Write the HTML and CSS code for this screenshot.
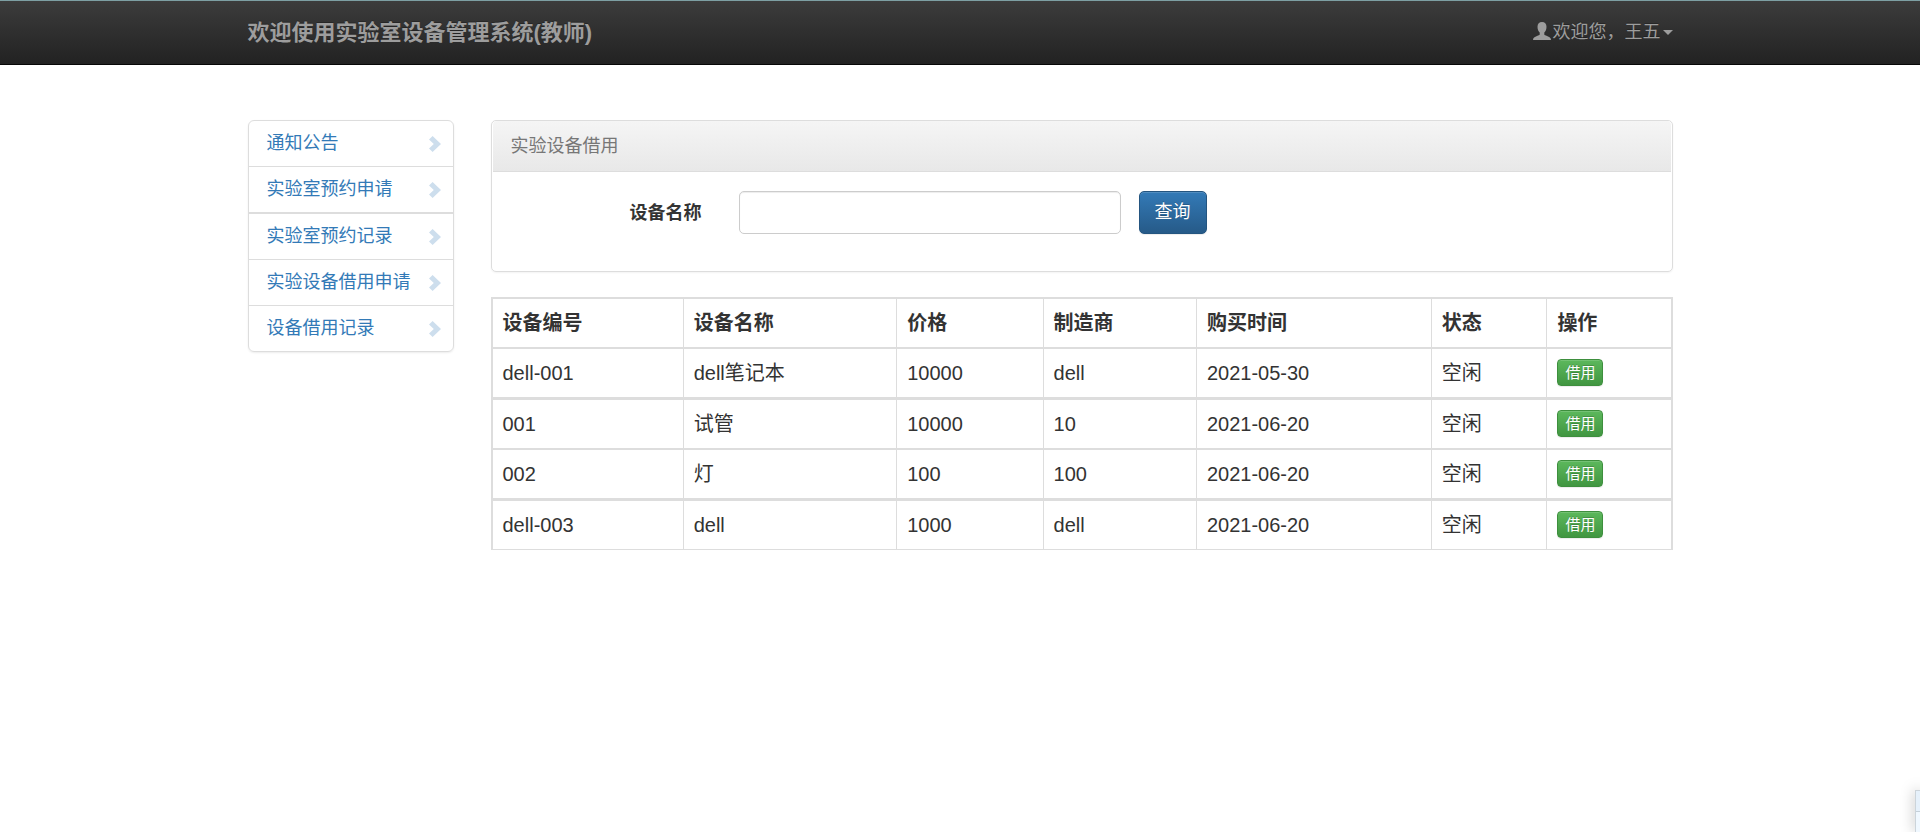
FILE: index.html
```html
<!DOCTYPE html>
<html lang="zh-CN">
<head>
<meta charset="utf-8">
<title>实验室设备管理系统</title>
<link rel="stylesheet" href="styles.css">
</head>
<body>
<svg class="sprite" aria-hidden="true">
  <symbol id="chevron" viewBox="0 0 12 16"><path d="M3.6 0 L12 8 L3.6 16 L0 12.4 L4.8 8 L0 3.6 Z"/></symbol>
</svg>
<header class="navbar">
  <div class="container navbar-inner">
    <a class="brand" href="#">欢迎使用实验室设备管理系统(教师)</a>
    <a class="user" href="#">
      <svg class="user-icon" viewBox="0 0 18 18" aria-hidden="true"><path d="M9 0C6.200 0 4.500 1.800 4.500 4.800C4.500 7.500 5.400 9.400 6.700 10.600V12.400C6.500 13 5.500 13.300 4 13.900C1.700 14.800 0 15.500 0 18H18C18 15.500 16.300 14.800 14 13.900C12.500 13.300 11.500 13 11.300 12.400V10.600C12.600 9.400 13.500 7.500 13.500 4.800C13.500 1.800 11.800 0 9 0Z"/></svg>
      <span>欢迎您，王五</span>
      <span class="caret"></span>
    </a>
  </div>
</header>
<div class="container layout">
  <nav class="side">
    <a href="#">通知公告<svg class="chevron"><use href="#chevron"/></svg></a>
    <a href="#">实验室预约申请<svg class="chevron"><use href="#chevron"/></svg></a>
    <a href="#">实验室预约记录<svg class="chevron"><use href="#chevron"/></svg></a>
    <a href="#">实验设备借用申请<svg class="chevron"><use href="#chevron"/></svg></a>
    <a href="#">设备借用记录<svg class="chevron"><use href="#chevron"/></svg></a>
  </nav>
  <main class="main">
    <section class="panel">
      <div class="panel-heading">实验设备借用</div>
      <form class="search">
        <label for="name">设备名称</label>
        <input id="name" type="text">
        <button class="btn btn-primary" type="button">查询</button>
      </form>
    </section>
    <table class="table">
      <colgroup><col class="c-id"><col class="c-name"><col class="c-price"><col class="c-maker"><col class="c-date"><col class="c-state"><col></colgroup>
      <thead>
        <tr><th>设备编号</th><th>设备名称</th><th>价格</th><th>制造商</th><th>购买时间</th><th>状态</th><th>操作</th></tr>
      </thead>
      <tbody>
        <tr><td>dell-001</td><td>dell笔记本</td><td>10000</td><td>dell</td><td>2021-05-30</td><td>空闲</td><td><button class="btn btn-success" type="button">借用</button></td></tr>
        <tr><td>001</td><td>试管</td><td>10000</td><td>10</td><td>2021-06-20</td><td>空闲</td><td><button class="btn btn-success" type="button">借用</button></td></tr>
        <tr><td>002</td><td>灯</td><td>100</td><td>100</td><td>2021-06-20</td><td>空闲</td><td><button class="btn btn-success" type="button">借用</button></td></tr>
        <tr><td>dell-003</td><td>dell</td><td>1000</td><td>dell</td><td>2021-06-20</td><td>空闲</td><td><button class="btn btn-success" type="button">借用</button></td></tr>
      </tbody>
    </table>
  </main>
</div>
<aside class="float-tab"></aside>
</body>
</html>
```
FILE: styles.css
```css
* { box-sizing: border-box; }
body {
  margin: 0;
  background: #fff;
  color: #333;
  font: 18px/25px "Liberation Sans", "Noto Sans CJK SC", sans-serif;
}
a { text-decoration: none; }
button, input { font: inherit; }
.sprite { display: none; }
.container { width: 100%; max-width: 1463px; margin: 0 auto; padding: 0 19px; }

.navbar {
  border-top: 1px solid #7d9fa3;
  border-bottom: 1px solid #080808;
  background: linear-gradient(#3c3c3c, #222);
}
.navbar-inner { display: flex; justify-content: space-between; align-items: center; min-height: 63px; }
.brand { color: #9d9d9d; font-size: 22px; font-weight: bold; text-shadow: 0 -1px 0 rgba(0, 0, 0, .25); }
.user { display: flex; align-items: center; gap: 2px; color: #9d9d9d; text-shadow: 0 -1px 0 rgba(0, 0, 0, .25); }
.user-icon { width: 18px; height: 18px; margin-bottom: 4px; fill: #9d9d9d; }
.caret { border: 5px solid transparent; border-top-color: #9d9d9d; border-bottom: 0; }

.layout { display: flex; align-items: flex-start; gap: 37px; padding-top: 55px; }
.side {
  flex: 0 0 206px;
  border: 1px solid #ddd;
  border-radius: 6px;
  box-shadow: 0 1px 2px rgba(0, 0, 0, .075);
}
.side a {
  display: flex;
  justify-content: space-between;
  align-items: center;
  padding: 10px 12px 10px 18px;
  color: #337ab7;
}
.side a + a { border-top: 1px solid #ddd; }
.side a:nth-child(3) { border-top-width: 2px; }
.chevron { width: 12px; height: 16px; fill: #cddeed; }

.main { flex: 1; min-width: 0; }
.panel {
  margin-bottom: 25px;
  border: 1px solid #ddd;
  border-radius: 5px;
  box-shadow: 0 1px 2px rgba(0, 0, 0, .05);
}
.panel-heading {
  margin: 0 1px;
  padding: 13px 18px 12px;
  border-bottom: 1px solid #ddd;
  border-radius: 4px 4px 0 0;
  background: linear-gradient(#f5f5f5, #e8e8e8);
  color: #777;
}
.search { display: flex; align-items: center; padding: 19px 19px 37px; }
.search label { flex: 0 0 191px; padding-top: 2px; text-align: right; font-weight: bold; }
.search input {
  flex: 0 1 382px;
  min-width: 0;
  height: 43px;
  margin: 0 18px 0 37px;
  padding: 7px 15px;
  border: 1px solid #ccc;
  border-radius: 5px;
  background: #fff;
  box-shadow: inset 0 1px 1px rgba(0, 0, 0, .075);
}
.btn { border: 1px solid; border-radius: 5px; color: #fff; text-shadow: 0 -1px 0 rgba(0, 0, 0, .2); }
.btn-primary {
  height: 43px;
  padding: 0 15px;
  border-color: #245580;
  background: linear-gradient(#337ab7, #265a88);
  box-shadow: inset 0 1px 0 rgba(255, 255, 255, .15), 0 1px 1px rgba(0, 0, 0, .075);
}
.btn-success {
  display: block;
  height: 27px;
  margin-bottom: 1px;
  padding: 0 7px;
  border-color: #3e8f3e;
  border-radius: 4px;
  background: linear-gradient(#5cb85c, #419641);
  box-shadow: inset 0 1px 0 rgba(255, 255, 255, .15), 0 1px 1px rgba(0, 0, 0, .075);
  font-size: 15px;
  line-height: 22px;
}

.table {
  width: 100%;
  table-layout: fixed;
  border: 1px solid #ddd;
  border-width: 0 1px 1px;
  border-spacing: 0;
  font-size: 20px;
  line-height: 28px;
}
.table th, .table td {
  height: 50px;
  padding: 10px;
  border: 0 solid #ddd;
  border-width: 2px 0 0 1px;
  text-align: left;
  vertical-align: middle;
}
.table th:last-child, .table td:last-child { border-right-width: 1px; }
.table tbody tr:nth-child(even) td { height: 51px; border-top-width: 3px; }
.c-id { width: 16.2%; }
.c-name { width: 18.1%; }
.c-price { width: 12.4%; }
.c-maker { width: 13%; }
.c-date { width: 19.9%; }
.c-state { width: 9.8%; }

.float-tab {
  position: fixed;
  right: 0;
  bottom: 0;
  width: 5px;
  height: 42px;
  border: 1px solid #ccd4da;
  border-width: 1px 0 0 1px;
  background: linear-gradient(#e6f1fb 20px, #c5d0d9 20px, #c5d0d9 21px, #f0f8ff 21px);
  box-shadow: 0 0 14px rgba(0, 0, 0, .35);
}
```
